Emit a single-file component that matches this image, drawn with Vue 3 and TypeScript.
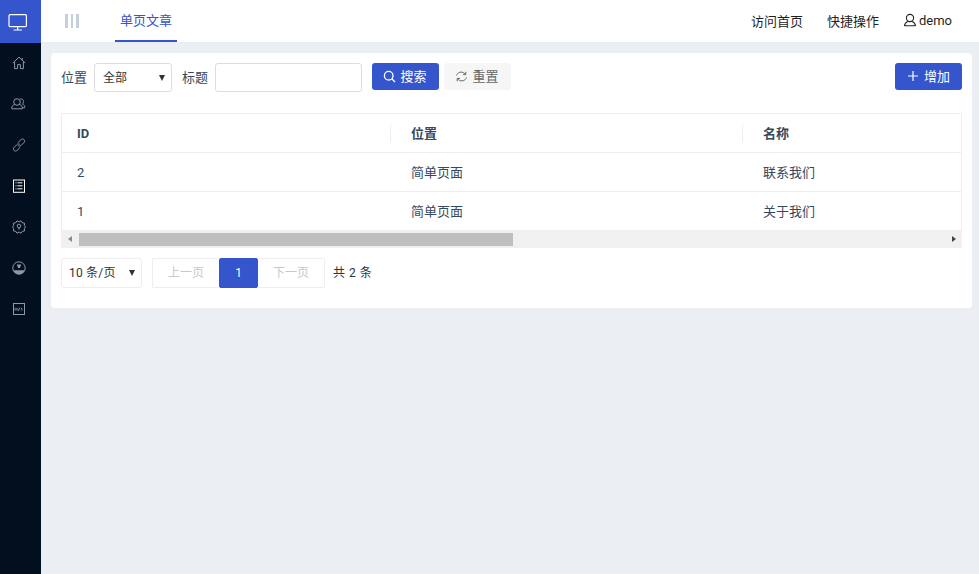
<script setup lang="ts">
const rows = [
  { id: 2, pos: '简单页面', name: '联系我们' },
  { id: 1, pos: '简单页面', name: '关于我们' }
]
</script>

<template>
  <div class="app">
    <aside class="side">
      <div class="logo">
        <svg width="20" height="20" viewBox="0 0 20 20" fill="none" stroke="#fff" stroke-width="1.2">
          <rect x="1" y="2.6" width="17.4" height="12" rx="1.2" />
          <path d="M9.7 14.6v3M5.5 18h8.4" />
        </svg>
      </div>
      <nav class="menu">
        <div class="item">
          <svg width="14" height="14" viewBox="0 0 14 14"><path d="M.8 7 7 1.2 13.2 7M10.2 2v2.200M2.600 6v6.600h3v-4h2.800v4h3V6" /></svg>
        </div>
        <div class="item">
          <svg width="15" height="14" viewBox="0 0 15 14"><circle cx="6" cy="5" r="3.300" /><path d="M3.800 7.500C1.500 8.300.5 9.500.8 11.800h10.600c.3-2.300-.7-3.500-3-4.300M8.800 2.200c2.400-.9 4.300 1 3.600 3.300-.2.700-.6 1.200-1 1.600 1.800.6 2.600 1.800 2.300 3.700h-2" /></svg>
        </div>
        <div class="item">
          <svg width="14" height="14" viewBox="0 0 14 14"><path d="M6 4.500 9 1.600c.9-.9 2.300-.8 3 0 .8.800.8 2 0 2.900L9 7.500c-.9.800-2.100.800-2.900 0M8 9.500 5 12.400c-.9.900-2.300.8-3 0-.8-.8-.8-2 0-2.900l3-3c.9-.8 2.100-.8 2.900 0" /></svg>
        </div>
        <div class="item active">
          <svg width="14" height="14" viewBox="0 0 14 14"><rect x="1.500" y="1" width="11" height="12.300" /><path d="M3.500 3.800h1M5.500 3.800h5M3.500 6.800h1M5.500 6.800h5M3.500 9.800h1M5.500 9.800h5" /></svg>
        </div>
        <div class="item">
          <svg width="14" height="14" viewBox="0 0 14 14"><path d="M5 .8 7 2 9 .8l1.300 2 2.300.4-.3 2.300L13.500 7l-1.200 1.700.3 2.200-2.300.4L9 13.200 7 12l-2 1.200-1.300-1.900-2.300-.4.300-2.200L.5 7l1.200-1.500-.3-2.300 2.300-.4z" /><circle cx="7" cy="6" r="1.800" /><path d="M7 7.800v2" /></svg>
        </div>
        <div class="item">
          <svg width="14" height="14" viewBox="0 0 14 14"><circle cx="7" cy="7" r="6.200" /><path class="solid" d="M4.800 3.500h4.400L7.900 7H6.100zM1.200 9.200h11.600C11.800 12 9.500 13.200 7 13.200S2.200 12 1.200 9.200z" /></svg>
        </div>
        <div class="item">
          <svg width="14" height="14" viewBox="0 0 14 14"><rect x="1.500" y="1.500" width="11" height="11" /><path d="M3.300 5.800 2.800 7.200l.5 1.400M5 5.800v2.800M6.400 8.800l1.200-3M9 5.800l1.200 1.400L9 8.600" /></svg>
        </div>
      </nav>
    </aside>

    <div class="main">
      <header class="top">
        <div class="top-left">
          <div class="bars"><i></i><i></i><i></i></div>
          <div class="tab">单页文章</div>
        </div>
        <div class="top-right">
          <span>访问首页</span>
          <span>快捷操作</span>
          <span class="user">
            <svg width="14" height="14" viewBox="0 0 14 14" fill="none" stroke="#222" stroke-width="1.100">
              <circle cx="7" cy="5" r="3.600" />
              <path d="M1.500 13c.2-2.600 1.800-4 3.300-4.600M12.500 13c-.2-2.600-1.800-4-3.300-4.600M1.500 12.800h11" />
            </svg>
            demo
          </span>
        </div>
      </header>

      <main class="content">
        <section class="card">
          <div class="toolbar">
            <div class="filters">
              <label>位置</label>
              <span class="sel-wrap"><select class="sel pos"><option>全部</option></select></span>
              <label class="l2">标题</label>
              <input class="txt" type="text" />
              <button class="btn primary search">
                <svg width="13" height="13" viewBox="0 0 13 13" fill="none" stroke="#fff" stroke-width="1.300"><circle cx="5.700" cy="5.700" r="4.300" /><path d="m8.800 8.800 3.200 3.200" /></svg>
                搜索
              </button>
              <button class="btn ghost">
                <svg width="13" height="13" viewBox="0 0 13 13" fill="none" stroke="#666" stroke-width="1"><path d="M1.500 5.500C2.500 2.500 6.500.8 9.500 3.300l1 1M11.500 7.500c-1 3-5 4.700-8 2.200l-1-1" /><path d="M10.800 1.800v2.800H8M2.200 11.200V8.400H5" /></svg>
                重置
              </button>
            </div>
            <button class="btn primary add">
              <svg width="12" height="12" viewBox="0 0 12 12" fill="none" stroke="#fff" stroke-width="1.200"><path d="M6 1v10M1 6h10" /></svg>
              增加
            </button>
          </div>

          <div class="table-box">
            <table class="table">
              <thead>
                <tr><th class="c1"><span>ID</span></th><th class="c2"><span>位置</span></th><th><span>名称</span></th></tr>
              </thead>
              <tbody>
                <tr v-for="r in rows" :key="r.id">
                  <td>{{ r.id }}</td><td>{{ r.pos }}</td><td>{{ r.name }}</td>
                </tr>
              </tbody>
            </table>
          </div>
          <div class="hbar">
            <i class="arrow left"></i>
            <div class="thumb"></div>
            <i class="arrow right"></i>
          </div>

          <div class="pager">
            <span class="sel-wrap"><select class="sel size"><option>10 条/页</option></select></span>
            <div class="pages">
              <span class="pg off">上一页</span>
              <span class="pg cur">1</span>
              <span class="pg off">下一页</span>
            </div>
            <span class="total">共 2 条</span>
          </div>
        </section>
      </main>
    </div>
  </div>
</template>

<style>
html, body { margin: 0; padding: 0; }
</style>

<style scoped>
.app {
  display: flex;
  width: 979px;
  height: 574px;
  overflow: hidden;
  background: #ebeef3;
  font-family: Roboto, "Noto Sans CJK SC", sans-serif;
  font-size: 13px;
  color: #34495e;
}
.side { width: 41px; flex: none; background: #010f1e; }
.logo {
  height: 43px;
  background: #3555cc;
  display: flex;
  align-items: center;
  justify-content: center;
  padding-right: 5px;
  box-sizing: border-box;
}
.menu { display: flex; flex-direction: column; margin-top: -1px; }
.item {
  height: 41px;
  display: flex;
  align-items: center;
  justify-content: center;
  padding-right: 4px;
}
.item svg { fill: none; stroke: #8c9aa6; stroke-width: 1; }
.item .solid { fill: #8c9aa6; stroke: none; }
.item.active svg { stroke: #fff; }
.main { flex: 1; min-width: 0; display: flex; flex-direction: column; }
.top {
  height: 42px;
  background: #fff;
  border-bottom: 1px solid #e8ebef;
  display: flex;
  justify-content: space-between;
  flex: none;
}
.top-left { display: flex; }
.bars { display: flex; gap: 3px; margin: 14px 0 0 24px; height: 14px; }
.bars i { width: 2.500px; height: 14px; background: #c5d0dc; }
.tab {
  margin-left: 36px;
  width: 62px;
  height: 42px;
  padding-left: 1px;
  box-sizing: border-box;
  text-align: center;
  line-height: 41px;
  color: #3555cc;
  border-bottom: 2px solid #3555cc;
}
.top-right {
  display: flex;
  align-items: center;
  gap: 24px;
  padding-right: 27px;
  color: #1f1f1f;
  height: 40px;
}
.user { display: flex; align-items: center; gap: 2px; }
.content { flex: 1; padding: 10px 7px 0 10px; }
.card {
  height: 255px;
  background: #fff;
  border-radius: 4px;
  padding: 10px;
  box-sizing: border-box;
}
.toolbar { display: flex; justify-content: space-between; height: 50px; }
.filters { display: flex; align-items: flex-start; }
.filters label { line-height: 30px; color: #34495e; margin-right: 7px; }
.filters .l2 { margin-left: 10px; }
.sel-wrap { position: relative; display: block; flex: none; }
.sel-wrap::after {
  content: "";
  position: absolute;
  right: 7px;
  top: 50%;
  margin-top: -3px;
  border-left: 3.500px solid transparent;
  border-right: 3.500px solid transparent;
  border-top: 6px solid #333;
  pointer-events: none;
}
.sel {
  display: block;
  appearance: none;
  -webkit-appearance: none;
  font-family: inherit;
  font-size: 12px;
  color: #333;
  background: #fff;
  border: 1px solid #ddd;
  border-radius: 3px;
  box-sizing: border-box;
  outline: none;
}
.pos { width: 78px; height: 29px; padding-left: 8px; }
.txt {
  width: 147px;
  height: 29px;
  box-sizing: border-box;
  border: 1px solid #ddd;
  border-radius: 3px;
  outline: none;
  padding: 0 6px;
  background: #fff;
}
.btn {
  height: 27px;
  border: none;
  border-radius: 3px;
  font: inherit;
  padding: 0 0 2px;
  display: flex;
  align-items: center;
  justify-content: center;
  gap: 5px;
}
.btn svg { margin-top: 1px; }
.primary { background: #3555cc; color: #fff; }
.search { width: 67px; margin-left: 10px; padding-right: 2px; }
.ghost { width: 67px; margin-left: 5px; background: #f6f6f6; color: #666; padding-right: 2px; }
.add { width: 67px; }
.table-box {
  width: 901px;
  overflow: hidden;
  box-sizing: border-box;
  border: 1px solid #eee;
  border-bottom: none;
}
.table { width: 1800px; border-collapse: collapse; table-layout: fixed; }
th, td {
  height: 38px;
  padding: 0;
  text-align: left;
  border-bottom: 1px solid #eee;
  font-size: 13px;
  color: #34495e;
}
tbody tr:last-child td { border-bottom: none; }
th { font-weight: 700; position: relative; }
th span { display: block; padding-left: 20px; margin-bottom: 2px; }
th.c1 span { padding-left: 15px; margin-bottom: 0; }
td { padding-left: 20px; height: 36px; padding-bottom: 2px; }
td:first-child { padding-left: 15px; height: 38px; padding-bottom: 0; }
th.c1 { width: 329px; }
th.c2 { width: 352px; }
th.c1::after, th.c2::after {
  content: "";
  position: absolute;
  right: 0;
  top: 11px;
  height: 17px;
  width: 1px;
  background: #eee;
}
.hbar {
  width: 901px;
  height: 18px;
  background: #f0f0f0;
  position: relative;
}
.thumb {
  position: absolute;
  left: 18px;
  top: 3px;
  width: 434px;
  height: 13px;
  background: #bfbfbf;
}
.arrow { position: absolute; top: 6px; width: 0; height: 0; border-top: 3.500px solid transparent; border-bottom: 3.500px solid transparent; }
.arrow.left { left: 7px; border-right: 4px solid #8a8a8a; }
.arrow.right { right: 6px; border-left: 4px solid #444; }
.pager { display: flex; align-items: flex-start; margin-top: 10px; }
.size { width: 81px; height: 30px; padding-left: 7px; border-color: #eee; font-size: 12px; letter-spacing: .2px; }
.pages { display: flex; margin-left: 10px; }
.pg {
  height: 30px;
  box-sizing: border-box;
  line-height: 28px;
  text-align: center;
  font-size: 12px;
  border: 1px solid #eee;
}
.off { width: 67px; color: #c8c8c8; }
.pg:first-child { border-right: none; border-radius: 2px 0 0 2px; }
.pg:last-child { border-left: none; border-radius: 0 2px 2px 0; }
.cur { width: 39px; background: #3555cc; border-color: #3555cc; color: #fff; border-radius: 2px; }
.total { margin-left: 8px; line-height: 30px; font-size: 12px; color: #333; word-spacing: 1px; }
</style>
